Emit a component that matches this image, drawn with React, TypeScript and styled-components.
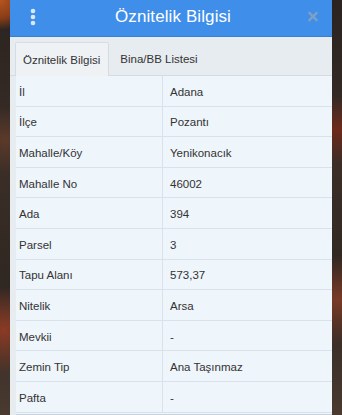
import styled, { createGlobalStyle } from 'styled-components';

const GlobalStyle = createGlobalStyle`
  html, body {
    margin: 0;
    padding: 0;
  }
  body {
    font-family: "Liberation Sans", Arial, sans-serif;
  }
`;

const Page = styled.div`
  width: 342px;
  height: 415px;
  overflow: hidden;
  padding: 0 10px;
  box-sizing: border-box;
  background:
    radial-gradient(circle at 0 0, #b6561e 0, #8a3c18 18px, transparent 30px),
    radial-gradient(ellipse at 5px 140px, #5b3a2a 0, transparent 40px),
    radial-gradient(ellipse at 338px 130px, #6e2a1c 0, transparent 40px),
    radial-gradient(ellipse at 338px 300px, #7a3a26 0, transparent 50px),
    radial-gradient(ellipse at 4px 330px, #8c3b25 0, transparent 45px),
    linear-gradient(180deg, #2a2320 0%, #3b2e27 40%, #2f2722 70%, #4a3a30 100%);
`;

const Modal = styled.div`
  height: 100%;
  display: flex;
  flex-direction: column;
  background: #e7ecf0;
`;

const Header = styled.header`
  height: 37px;
  flex-shrink: 0;
  display: flex;
  align-items: center;
  justify-content: space-between;
  padding: 0 14px 3px 18px;
  background: #3e8eea;
  border-bottom: 1px solid #3a7fcf;
  box-sizing: border-box;
`;

const Title = styled.h1`
  margin: 0;
  font-size: 17px;
  font-weight: 400;
  color: #ffffff;
  letter-spacing: 0.1px;
`;

const IconButton = styled.span`
  width: 10px;
  height: 20px;
  display: flex;
  align-items: center;
  justify-content: center;
`;

const Tabs = styled.nav`
  display: flex;
  padding: 5px 0 0 5px;
  height: 39px;
  box-sizing: border-box;
  border-bottom: 1px solid #d5dbe0;
`;

const Tab = styled.div<{ $active?: boolean }>`
  display: flex;
  align-items: center;
  padding: 0 ${p => (p.$active ? '8px' : '16px')} 0 ${p => (p.$active ? '7px' : '10px')};
  font-size: 11.5px;
  color: #333;
  background: ${p => (p.$active ? '#eef2f5' : 'transparent')};
  border: 1px solid ${p => (p.$active ? '#d6dce1' : 'transparent')};
  border-bottom: none;
  border-radius: 2px 2px 0 0;
  margin-bottom: ${p => (p.$active ? '-1px' : '0')};
`;

const Table = styled.div`
  margin-left: 6px;
  flex: 1;
  display: grid;
  grid-template-columns: 146px 1fr;
  grid-auto-rows: 30.6px;
  background: #eef5fb;
  border-bottom: 1px solid #c9d2da;
`;

const Cell = styled.div<{ $value?: boolean }>`
  display: flex;
  align-items: center;
  padding: 2px 0 0 ${p => (p.$value ? '7px' : '3px')};
  font-size: 11.5px;
  color: #333;
  border-bottom: 1px solid #d9e2ea;
  border-left: ${p => (p.$value ? '1px solid #d9e2ea' : 'none')};
  box-sizing: border-box;
`;

const rows: [string, string][] = [
  ['İl', 'Adana'],
  ['İlçe', 'Pozantı'],
  ['Mahalle/Köy', 'Yenikonacık'],
  ['Mahalle No', '46002'],
  ['Ada', '394'],
  ['Parsel', '3'],
  ['Tapu Alanı', '573,37'],
  ['Nitelik', 'Arsa'],
  ['Mevkii', '-'],
  ['Zemin Tip', 'Ana Taşınmaz'],
  ['Pafta', '-'],
];

function App() {
  return (
    <Page>
      <GlobalStyle />
      <Modal>
        <Header>
          <IconButton>
            <svg width="6" height="18" viewBox="0 0 6 18">
              <circle cx="3" cy="3" r="2.3" fill="#d9e8fb" />
              <circle cx="3" cy="9" r="2.3" fill="#d9e8fb" />
              <circle cx="3" cy="15" r="2.3" fill="#d9e8fb" />
            </svg>
          </IconButton>
          <Title>Öznitelik Bilgisi</Title>
          <IconButton>
            <svg width="11" height="11" viewBox="0 0 11 11">
              <path d="M1.5 1.5 L9.5 9.5 M9.5 1.5 L1.5 9.5" stroke="#7f9fc4" strokeWidth="2.6" strokeLinecap="round" />
            </svg>
          </IconButton>
        </Header>
        <Tabs>
          <Tab $active>Öznitelik Bilgisi</Tab>
          <Tab>Bina/BB Listesi</Tab>
        </Tabs>
        <Table>
          {rows.map(([k, v]) => [
            <Cell key={k}>{k}</Cell>,
            <Cell key={k + '-v'} $value>{v}</Cell>,
          ])}
        </Table>
      </Modal>
    </Page>
  );
}

export default App;
